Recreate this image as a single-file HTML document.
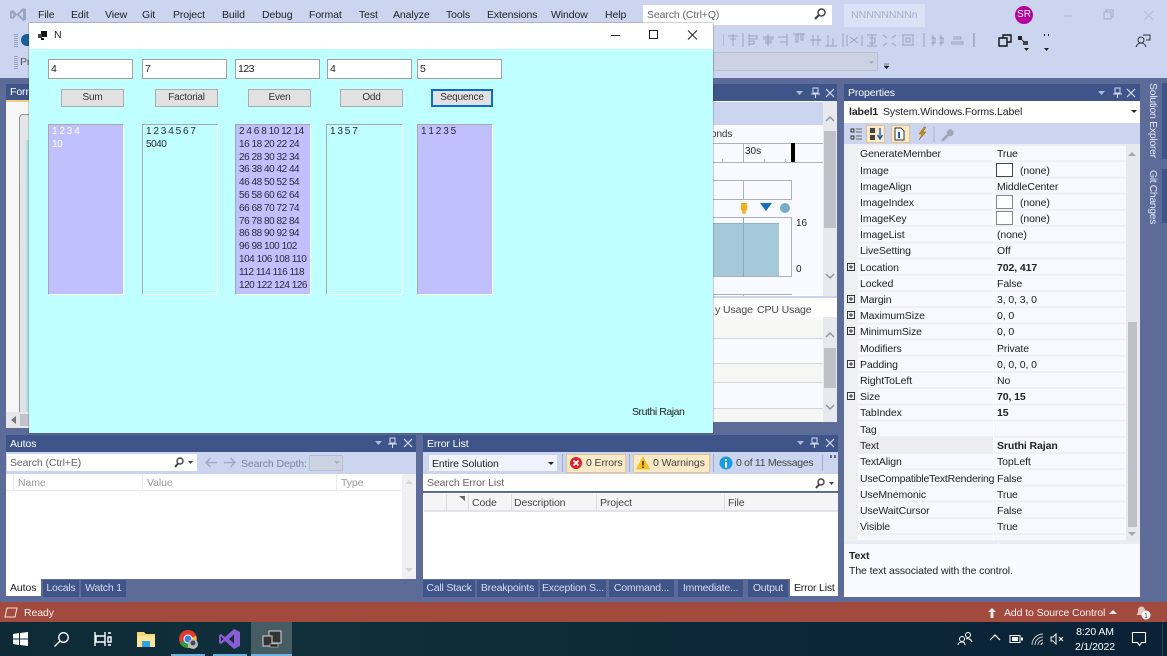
<!DOCTYPE html>
<html><head><meta charset="utf-8"><style>
html,body{margin:0;padding:0}
body{width:1167px;height:656px;overflow:hidden;position:relative;background:#5d6b99;font-family:"Liberation Sans",sans-serif;font-size:10.5px;color:#222}
div,span,svg{position:absolute;box-sizing:border-box}
.t{white-space:nowrap;line-height:14px;letter-spacing:-.1px;margin-top:1px}
.w{color:#fff}
.g{color:#9a9a9a}
.b{font-weight:bold}
.hd{background:#3f5489;height:17px}
.tb{background:#3f5489;color:#d5dcf2;height:17px;line-height:17px;text-align:center;white-space:nowrap;top:580px;letter-spacing:-.2px}
.in{background:#fff;border:1px solid #a0a0a0;height:20px;top:59px;width:85px;line-height:18px;padding-left:2px;font-size:10.5px;letter-spacing:-.5px}
.bt{background:#e1e1e1;border:1px solid #adadad;height:18px;top:89px;width:63px;text-align:center;line-height:16px;font-size:10px;letter-spacing:-.2px;color:#333}
.lb{top:124px;height:171px;width:76px;border:1px solid;border-color:#a8a8a8 #fff #fff #a8a8a8;padding:1px 0 0 3px;line-height:12.8px;font-size:10px;white-space:pre;letter-spacing:-.47px;color:#2a2a3a}
.ln{background:#e9ecf8}
</style></head><body>

<!-- top chrome -->
<div style="left:0;top:0;width:1167px;height:78px;background:#ccd5f0"></div>
<svg style="left:9px;top:6px" width="18" height="17" viewBox="0 0 18 17"><path d="M1 5l3-1 4 4 6-6 3 1v11l-3 1-6-6-4 4-3-1zM3 7v4l2-2zM14 5l-4 3.500 4 3.500z" fill="#9aa5c6" fill-rule="evenodd"/></svg>
<span class="t" style="left:38px;top:7px">File</span>
<span class="t" style="left:71px;top:7px">Edit</span>
<span class="t" style="left:105px;top:7px">View</span>
<span class="t" style="left:142px;top:7px">Git</span>
<span class="t" style="left:173px;top:7px">Project</span>
<span class="t" style="left:222px;top:7px">Build</span>
<span class="t" style="left:262px;top:7px">Debug</span>
<span class="t" style="left:309px;top:7px">Format</span>
<span class="t" style="left:359px;top:7px">Test</span>
<span class="t" style="left:393px;top:7px">Analyze</span>
<span class="t" style="left:446px;top:7px">Tools</span>
<span class="t" style="left:487px;top:7px">Extensions</span>
<span class="t" style="left:551px;top:7px">Window</span>
<span class="t" style="left:605px;top:7px">Help</span>
<div style="left:643px;top:5px;width:189px;height:20px;background:#fff"></div>
<span class="t" style="left:647px;top:7px;color:#666">Search (Ctrl+Q)</span>
<svg style="left:812px;top:7px" width="16" height="15" viewBox="0 0 16 15"><circle cx="9.500" cy="5.500" r="3.500" fill="none" stroke="#444" stroke-width="1.500"/><path d="M7 8l-4 4" stroke="#444" stroke-width="2.200"/></svg>
<div style="left:844px;top:4px;width:81px;height:23px;background:#dbe2f6"></div>
<span class="t" style="left:851px;top:7px;color:#a5aec9;letter-spacing:0">NNNNNNNNn</span>
<div style="left:1015px;top:6px;width:18px;height:18px;border-radius:50%;background:#b5009a;color:#fff;text-align:center;line-height:18px;font-size:10px">SR</div>
<svg style="left:1060px;top:6px" width="100" height="18" viewBox="0 0 100 18"><path d="M4 10h8" stroke="#b5bdd5"/><path d="M44 6h7v7h-7zM46 6V4h7v7h-2" fill="none" stroke="#a4adc8"/><path d="M84 5l9 9M93 5l-9 9" stroke="#b5bdd5"/></svg>

<!-- toolbar -->
<div style="left:14px;top:33px;width:4px;height:14px;background:repeating-linear-gradient(0deg,#9ba4c0 0 1px,#ccd5f0 1px 2px)"></div>
<div style="left:21px;top:34px;width:8px;height:12px;background:#1c5d9a;border-radius:6px 0 0 6px"></div>
<div style="left:14px;top:55px;width:4px;height:14px;background:repeating-linear-gradient(0deg,#9ba4c0 0 1px,#ccd5f0 1px 2px)"></div>
<span class="t" style="left:20px;top:54px;color:#555">Pr</span>
<svg style="left:713px;top:30px" width="370" height="20" viewBox="0 0 370 20" fill="none" stroke="#98a2be">
<path d="M10 5h1M10 7h1M10 9h1M10 11h1M10 13h1M10 15h1"/>
<path d="M15 6h10M20 4v12M17 9h6"/>
<path d="M30 3v14M36 4v12M36 6h8v3h-8M36 11h5v3h-5"/>
<path d="M55 4v12M50 7h10v2H50M52 11h6v2h-6"/>
<path d="M74 4v12M65 7h9M67 12h7"/>
<path d="M80 4h12M83 4v8h2V4M88 4v6h2V4"/>
<path d="M100 5v11M105 5v11M97 10h11"/>
<path d="M112 16h12M115 5v11M120 8v8"/>
<path d="M130 3v14M134 5v11M149 5v11M137 7l8 6M145 7l-8 6"/>
<path d="M154 5h10M154 16h10M159 5v11M156 8h6v5h-6"/>
<path d="M170 5l4 3M183 5l-4 3M170 16l4-3M183 16l-4-3"/>
<path d="M190 5h10v10h-10zM193 8h4v4h-4z"/>
<path d="M211 3v14M220 5v11M228 5v11M218 8h4v5h-4M226 8h4v5h-4"/>
<path d="M240 7h8v2h-8M238 12h12v2h-12"/>
<path d="M261 3v14" stroke="#7f88a6"/>
</svg>
<svg style="left:995px;top:33px" width="30" height="16" viewBox="0 0 30 16"><path d="M4 5h8v8H4zM8 5V2h8v7h-4" fill="none" stroke="#111" stroke-width="1.400"/></svg>
<svg style="left:1012px;top:33px" width="40" height="20" viewBox="0 0 40 20"><rect x="6" y="3" width="4" height="4" fill="#222"/><rect x="11" y="8" width="5" height="4" fill="#444"/><path d="M10 7l2 2" stroke="#222"/><path d="M12 15h5l-2.500 3zM32 15h5l-2.500 3" fill="#222"/><path d="M32 2h1M36 2h1" stroke="#222" stroke-width="2"/></svg>
<svg style="left:1133px;top:32px" width="20" height="18" viewBox="0 0 20 18"><circle cx="8" cy="8" r="3" fill="none" stroke="#333"/><path d="M3 15c1-3 3-4 5-4s4 1 5 4" fill="none" stroke="#333"/><path d="M10 3h7v5h-4" fill="none" stroke="#333"/></svg>
<div style="left:713px;top:52px;width:165px;height:19px;background:#ccd2e2;border:1px solid #b8bfd5"></div>
<svg style="left:868px;top:60px" width="8" height="6"><path d="M1 1h5L3.500 4z" fill="#aab"/></svg>
<svg style="left:883px;top:63px" width="8" height="8"><path d="M1 1h5M1 3h5L3.500 6z" fill="#222" stroke="#222" stroke-width=".5"/></svg>

<!-- designer panel (left) -->
<div class="hd" style="left:6px;top:84px;width:24px;height:16px"></div>
<span class="t w" style="left:10px;top:84px">Forr</span>
<div style="left:6px;top:100px;width:24px;height:2px;background:#f5cc84"></div>
<div style="left:6px;top:102px;width:24px;height:326px;background:#f6f6f7"></div>
<div style="left:19px;top:114px;width:11px;height:300px;border:1px solid #8c9097;border-width:1px 0 0 1px;border-radius:4px 0 0 0;background:linear-gradient(#e2e6ea,#dfe3e8)"></div>
<div style="left:26px;top:140px;width:4px;height:274px;background:#b2e0e0"></div>
<div style="left:6px;top:412px;width:24px;height:16px;background:#e6e7ec"></div>
<svg style="left:11px;top:416px" width="6" height="9"><path d="M5 0v8L0 4z" fill="#777"/></svg>
<div style="left:20px;top:414px;width:10px;height:12px;background:#c2c3c9"></div>

<!-- diagnostics panel -->
<div class="hd" style="left:713px;top:84px;width:124px"></div>
<svg style="left:795px;top:87px" width="40" height="12" viewBox="0 0 40 12"><path d="M1 4h7L4.500 8z" fill="#aebada"/><path d="M18 1h5v5h-5zM20.500 6v5M16 7h9" fill="none" stroke="#d5dcf2"/><path d="M31 2l8 8M39 2l-8 8" stroke="#d5dcf2" stroke-width="1.200"/></svg>
<div style="left:713px;top:101px;width:124px;height:321px;background:#fff"></div>
<div style="left:713px;top:102px;width:110px;height:23px;background:#ccd5f0"></div>
<div style="left:713px;top:125px;width:110px;height:170px;background:#f9faff"></div>
<span class="t" style="left:711px;top:127px;color:#333;font-size:10px">onds</span>
<div style="left:713px;top:143px;width:110px;height:1px;background:#a9b2bd"></div>
<div style="left:713px;top:162px;width:110px;height:1px;background:#a9b2bd"></div>
<div style="left:743px;top:143px;width:1px;height:19px;background:#a9b2bd"></div>
<div style="left:722px;top:159px;width:1px;height:3px;background:#a9b2bd"></div>
<div style="left:764px;top:159px;width:1px;height:3px;background:#a9b2bd"></div>
<div style="left:785px;top:159px;width:1px;height:3px;background:#a9b2bd"></div>
<span class="t" style="left:745px;top:144px;font-size:10px;letter-spacing:0">30s</span>
<div style="left:791px;top:143px;width:4px;height:19px;background:#000"></div>
<div style="left:713px;top:180px;width:79px;height:20px;border:1px solid #a9b2bd;border-left:0"></div>
<div style="left:743px;top:180px;width:1px;height:20px;background:#a9b2bd"></div>
<svg style="left:738px;top:202px" width="60" height="14"><path d="M3 1h6v6l-2 5H5L3 7z" fill="#f6b01a"/><path d="M22 1h12l-6 8z" fill="#0b72c4"/><circle cx="47" cy="6" r="5" fill="#75aecb"/></svg>
<div style="left:713px;top:217px;width:79px;height:60px;border:1px solid #a9b2bd;border-left:0"></div>
<div style="left:713px;top:223px;width:66px;height:53px;background:#a6c9da;border-top:1px solid #8db5c9"></div>
<div style="left:743px;top:217px;width:1px;height:60px;background:#8fa8b7"></div>
<span class="t" style="left:796px;top:216px;font-size:10px;letter-spacing:0">16</span>
<span class="t" style="left:796px;top:262px;font-size:10px;letter-spacing:0">0</span>
<div style="left:713px;top:294px;width:79px;height:1px;background:#a9b2bd"></div>
<div style="left:743px;top:294px;width:1px;height:3px;background:#a9b2bd"></div>
<div style="left:823px;top:101px;width:14px;height:195px;background:#e8e9ee"></div>
<div style="left:824px;top:131px;width:12px;height:97px;background:#bfc0c7"></div>
<svg style="left:824px;top:114px" width="12" height="170" viewBox="0 0 12 170" fill="none" stroke="#8f94a3" stroke-width="1.500"><path d="M2 7l4-4 4 4M2 160l4 4 4-4"/></svg>
<div style="left:713px;top:296px;width:124px;height:2px;background:#ccd5f0"></div>
<span class="t" style="left:715px;top:302px;color:#444">y Usage</span>
<span class="t" style="left:757px;top:302px;color:#444">CPU Usage</span>
<div style="left:713px;top:317px;width:110px;height:105px;background:#f9faff"></div>
<div style="left:713px;top:320px;width:110px;height:18px;background:#f6f6f4"></div>
<div style="left:713px;top:338px;width:110px;height:1px;background:#d5d5dc"></div>
<div style="left:713px;top:363px;width:110px;height:20px;background:#f6f6f4;border-top:1px solid #d5d5dc;border-bottom:1px solid #d5d5dc"></div>
<div style="left:713px;top:408px;width:110px;height:14px;background:#f6f6f4;border-top:1px solid #d5d5dc"></div>
<div style="left:823px;top:317px;width:14px;height:105px;background:#e8e9ee"></div>
<div style="left:824px;top:348px;width:12px;height:40px;background:#bfc0c7"></div>
<svg style="left:824px;top:330px" width="12" height="85" viewBox="0 0 12 85" fill="none" stroke="#8f94a3" stroke-width="1.500"><path d="M2 7l4-4 4 4M2 75l4 4 4-4"/></svg>

<!-- Properties -->
<div class="hd" style="left:844px;top:84px;width:296px"></div>
<span class="t w" style="left:848px;top:85px">Properties</span>
<svg style="left:1097px;top:87px" width="40" height="12" viewBox="0 0 40 12"><path d="M1 4h7L4.500 8z" fill="#aebada"/><path d="M18 1h5v5h-5zM20.500 6v5M16 7h9" fill="none" stroke="#d5dcf2"/><path d="M30 2l8 8M38 2l-8 8" stroke="#d5dcf2" stroke-width="1.200"/></svg>
<div style="left:844px;top:101px;width:296px;height:496px;background:#f9faff"></div>
<div style="left:844px;top:101px;width:296px;height:22px;background:#fff"></div>
<span class="t b" style="left:849px;top:104px">label1</span>
<span class="t" style="left:883px;top:104px">System.Windows.Forms.Label</span>
<svg style="left:1131px;top:110px" width="6" height="4"><path d="M0 0h6L3 3z" fill="#222"/></svg>
<div style="left:844px;top:123px;width:296px;height:21px;background:#ccd5f0"></div>
<div style="left:866px;top:125px;width:19px;height:18px;background:#fbe9c8;border:1px solid #e5c28c"></div>
<div style="left:891px;top:125px;width:19px;height:18px;background:#fbe9c8;border:1px solid #e5c28c"></div>
<svg style="left:849px;top:125px" width="110" height="18" viewBox="0 0 110 18"><path d="M2 4h3v3H2zM2 11h3v3H2z" fill="none" stroke="#333"/><path d="M7 4h6M7 7h6M7 11h6M7 14h6" stroke="#666"/><path d="M21 3h5v5h-5zM21 10h5v5h-5z" fill="#444"/><path d="M31 3v11M28.500 10l2.500 4 2.500-4" stroke="#1c5fb8" stroke-width="1.400" fill="none"/><path d="M46 3h6l3 3v9H46z" fill="#fff" stroke="#333"/><path d="M50 7v6" stroke="#1c5fb8" stroke-width="2"/><path d="M75 2l-5 7h3l-3 6 7-8h-3l3-5z" fill="#c98a1b" stroke="#7a5a1a" stroke-width=".4"/><path d="M85 2v15" stroke="#a9b2cf"/><path d="M92 15l6-6a3.500 3.500 0 1 1 2 2l-6 6z" fill="#a3a7b3"/></svg>
<div style="left:844px;top:144px;width:14px;height:397px;background:#f0f0f2"></div>
<div style="left:858px;top:144px;width:275px;height:397px;background:#eceef7"></div>
<div style="left:993px;top:144px;width:1px;height:397px;background:#fff"></div>
<div style="left:858px;top:146px;width:135px;height:394px;background:repeating-linear-gradient(180deg,#f8f9fe 0 14.300px,#eef0f8 14.300px 16.210px)"></div>
<div style="left:994px;top:146px;width:139px;height:394px;background:repeating-linear-gradient(180deg,#f8f9fe 0 14.300px,#eef0f8 14.300px 16.210px)"></div>
<div style="left:858px;top:438px;width:135px;height:16px;background:#ededf0"></div>
<span class="t" style="left:860px;top:146px">GenerateMember</span><span class="t" style="left:997px;top:146px">True</span>
<span class="t" style="left:860px;top:163px">Image</span><span class="t" style="left:1020px;top:163px">(none)</span>
<span class="t" style="left:860px;top:179px">ImageAlign</span><span class="t" style="left:997px;top:179px">MiddleCenter</span>
<span class="t" style="left:860px;top:195px">ImageIndex</span><span class="t" style="left:1020px;top:195px">(none)</span>
<span class="t" style="left:860px;top:211px">ImageKey</span><span class="t" style="left:1020px;top:211px">(none)</span>
<span class="t" style="left:860px;top:227px">ImageList</span><span class="t" style="left:997px;top:227px">(none)</span>
<span class="t" style="left:860px;top:243px">LiveSetting</span><span class="t" style="left:997px;top:243px">Off</span>
<span class="t" style="left:860px;top:260px">Location</span><span class="t b" style="left:997px;top:260px">702, 417</span>
<span class="t" style="left:860px;top:276px">Locked</span><span class="t" style="left:997px;top:276px">False</span>
<span class="t" style="left:860px;top:292px">Margin</span><span class="t" style="left:997px;top:292px">3, 0, 3, 0</span>
<span class="t" style="left:860px;top:308px">MaximumSize</span><span class="t" style="left:997px;top:308px">0, 0</span>
<span class="t" style="left:860px;top:324px">MinimumSize</span><span class="t" style="left:997px;top:324px">0, 0</span>
<span class="t" style="left:860px;top:341px">Modifiers</span><span class="t" style="left:997px;top:341px">Private</span>
<span class="t" style="left:860px;top:357px">Padding</span><span class="t" style="left:997px;top:357px">0, 0, 0, 0</span>
<span class="t" style="left:860px;top:373px">RightToLeft</span><span class="t" style="left:997px;top:373px">No</span>
<span class="t" style="left:860px;top:389px">Size</span><span class="t b" style="left:997px;top:389px">70, 15</span>
<span class="t" style="left:860px;top:405px">TabIndex</span><span class="t b" style="left:997px;top:405px">15</span>
<span class="t" style="left:860px;top:422px">Tag</span>
<span class="t" style="left:860px;top:438px">Text</span><span class="t b" style="left:997px;top:438px">Sruthi Rajan</span>
<span class="t" style="left:860px;top:454px">TextAlign</span><span class="t" style="left:997px;top:454px">TopLeft</span>
<span class="t" style="left:860px;top:471px;letter-spacing:-.2px">UseCompatibleTextRendering</span><span class="t" style="left:997px;top:471px">False</span>
<span class="t" style="left:860px;top:487px">UseMnemonic</span><span class="t" style="left:997px;top:487px">True</span>
<span class="t" style="left:860px;top:503px">UseWaitCursor</span><span class="t" style="left:997px;top:503px">False</span>
<span class="t" style="left:860px;top:519px">Visible</span><span class="t" style="left:997px;top:519px">True</span>
<div style="left:996px;top:163px;width:17px;height:14px;background:#fff;border:1px solid #444"></div>
<div style="left:996px;top:195px;width:17px;height:14px;background:#fff;border:1px solid #888"></div>
<div style="left:996px;top:211px;width:17px;height:14px;background:#fff;border:1px solid #888"></div>
<svg style="left:846px;top:262px" width="10" height="145" viewBox="0 0 10 145" fill="none" stroke="#333"><path d="M1.500 1.500h7v7h-7zM3 5h4M5 3v4M1.500 33.500h7v7h-7zM3 37h4M5 35v4M1.500 49.500h7v7h-7zM3 53h4M5 51v4M1.500 65.500h7v7h-7zM3 69h4M5 67v4M1.500 98.500h7v7h-7zM3 102h4M5 100v4M1.500 130.500h7v7h-7zM3 134h4M5 132v4"/></svg>
<div style="left:1126px;top:144px;width:14px;height:397px;background:#e8e9ee"></div>
<div style="left:1128px;top:322px;width:9px;height:205px;background:#bfc0c7"></div>
<svg style="left:1127px;top:150px" width="10" height="390"><path d="M1 6h8L5 2zM1 382h8l-4 4z" fill="#a5a8b3"/></svg>
<div style="left:844px;top:541px;width:296px;height:3px;background:#e9ebf5"></div>
<span class="t b" style="left:849px;top:548px">Text</span>
<span class="t" style="left:849px;top:563px">The text associated with the control.</span>

<!-- side tabs -->
<div class="t" style="left:1146px;top:83px;margin-top:0;color:#e3e8f8;writing-mode:vertical-rl;letter-spacing:-.3px">Solution Explorer</div>
<div class="t" style="left:1146px;top:170px;margin-top:0;color:#e3e8f8;writing-mode:vertical-rl;letter-spacing:-.4px">Git Changes</div>
<div style="left:1162px;top:83px;width:5px;height:76px;background:#3f5489"></div>
<div style="left:1162px;top:169px;width:5px;height:54px;background:#3f5489"></div>

<!-- Autos -->
<div class="hd" style="left:6px;top:435px;width:410px"></div>
<span class="t w" style="left:10px;top:436px">Autos</span>
<svg style="left:374px;top:437px" width="40" height="12" viewBox="0 0 40 12"><path d="M1 4h7L4.500 8z" fill="#aebada"/><path d="M16 1h5v5h-5zM18.500 6v5M14 7h9" fill="none" stroke="#d5dcf2"/><path d="M30 2l8 8M38 2l-8 8" stroke="#d5dcf2" stroke-width="1.200"/></svg>
<div style="left:6px;top:452px;width:410px;height:22px;background:#ccd5f0"></div>
<div style="left:7px;top:454px;width:190px;height:17px;background:#fff"></div>
<span class="t" style="left:10px;top:455px;color:#666">Search (Ctrl+E)</span>
<svg style="left:174px;top:456px" width="20" height="13" viewBox="0 0 20 13"><circle cx="6" cy="5" r="3" fill="none" stroke="#444" stroke-width="1.400"/><path d="M4 7.500L1 11" stroke="#444" stroke-width="2"/><path d="M14 5h5l-2.500 3z" fill="#444"/></svg>
<svg style="left:204px;top:456px" width="34" height="13" viewBox="0 0 34 13" fill="none" stroke="#a0a9c5" stroke-width="1.500"><path d="M13 6.500H2M6.500 2L2 6.500 6.500 11M20 6.500h11M26.500 2L31 6.500 26.500 11"/></svg>
<span class="t" style="left:241px;top:456px;color:#7c8396">Search Depth:</span>
<div style="left:309px;top:455px;width:34px;height:16px;background:#ccd2e2;border:1px solid #b8bfd5"></div>
<svg style="left:334px;top:461px" width="7" height="5"><path d="M0 0h6L3 3z" fill="#a5adc5"/></svg>
<div style="left:6px;top:474px;width:410px;height:105px;background:#fff"></div>
<div style="left:6px;top:490px;width:396px;height:1px;background:#e9ecf8"></div>
<div style="left:13px;top:474px;width:1px;height:16px;background:#e9ecf8"></div>
<div style="left:142px;top:474px;width:1px;height:16px;background:#e9ecf8"></div>
<div style="left:336px;top:474px;width:1px;height:16px;background:#e9ecf8"></div>
<span class="t g" style="left:18px;top:475px">Name</span>
<span class="t g" style="left:147px;top:475px">Value</span>
<span class="t g" style="left:341px;top:475px">Type</span>
<div style="left:402px;top:474px;width:14px;height:105px;background:#f0f0f3"></div>
<svg style="left:404px;top:478px" width="10" height="98"><path d="M1 6h8L5 2zM1 90h8l-4 4z" fill="#d3d5db"/></svg>
<div style="left:6px;top:579px;width:35px;height:17px;background:#fff"></div>
<span class="t" style="left:10px;top:580px">Autos</span>
<div class="tb" style="left:43px;width:36px">Locals</div>
<div class="tb" style="left:81px;width:45px">Watch 1</div>

<!-- Error list -->
<div class="hd" style="left:423px;top:435px;width:415px"></div>
<span class="t w" style="left:427px;top:436px">Error List</span>
<svg style="left:796px;top:437px" width="40" height="12" viewBox="0 0 40 12"><path d="M1 4h7L4.500 8z" fill="#aebada"/><path d="M16 1h5v5h-5zM18.500 6v5M14 7h9" fill="none" stroke="#d5dcf2"/><path d="M30 2l8 8M38 2l-8 8" stroke="#d5dcf2" stroke-width="1.200"/></svg>
<div style="left:423px;top:452px;width:415px;height:22px;background:#ccd5f0"></div>
<div style="left:429px;top:455px;width:128px;height:16px;background:#f0f3fc"></div>
<span class="t" style="left:432px;top:456px">Entire Solution</span>
<svg style="left:548px;top:462px" width="7" height="5"><path d="M0 0h6L3 3z" fill="#222"/></svg>
<div style="left:562px;top:454px;width:1px;height:18px;background:#a3adc9"></div>
<div style="left:566px;top:454px;width:60px;height:19px;background:#fbe9c8;border:1px solid #e5c28c"></div>
<svg style="left:569px;top:456px" width="14" height="14" viewBox="0 0 14 14"><circle cx="7" cy="7" r="6" fill="#e3202c"/><path d="M4.500 4.500l5 5M9.500 4.500l-5 5" stroke="#fff" stroke-width="1.800"/></svg>
<span class="t" style="left:586px;top:455px;color:#444">0 Errors</span>
<div style="left:629px;top:454px;width:1px;height:18px;background:#a3adc9"></div>
<div style="left:633px;top:454px;width:77px;height:19px;background:#fbe9c8;border:1px solid #e5c28c"></div>
<svg style="left:636px;top:456px" width="14" height="14" viewBox="0 0 14 14"><path d="M7 1l6.500 12H.5z" fill="#fdc414" stroke="#d9a400" stroke-width=".5"/><path d="M7 5v4.500M7 10.500v1.500" stroke="#222" stroke-width="1.400"/></svg>
<span class="t" style="left:653px;top:455px;color:#444">0 Warnings</span>
<div style="left:713px;top:454px;width:1px;height:18px;background:#a3adc9"></div>
<svg style="left:719px;top:456px" width="14" height="14" viewBox="0 0 14 14"><circle cx="7" cy="7" r="6.500" fill="#1c9ce0"/><path d="M7 3v1.800M7 6v5.500" stroke="#fff" stroke-width="2"/></svg>
<span class="t" style="left:736px;top:455px;color:#444;letter-spacing:-.3px">0 of 11 Messages</span>
<div style="left:822px;top:455px;width:1px;height:16px;background:#a3adc9"></div>
<svg style="left:830px;top:455px" width="7" height="4"><path d="M1 0v3M5 0v3" stroke="#444" stroke-width="1.500"/></svg>
<div style="left:423px;top:474px;width:415px;height:17px;background:#fff"></div>
<span class="t" style="left:427px;top:475px;color:#666">Search Error List</span>
<svg style="left:813px;top:477px" width="22" height="13" viewBox="0 0 22 13"><circle cx="8" cy="5" r="3" fill="none" stroke="#444" stroke-width="1.400"/><path d="M6 7.500L3 11" stroke="#444" stroke-width="2"/><path d="M16 5h5l-2.500 3z" fill="#444"/></svg>
<div style="left:423px;top:493px;width:415px;height:86px;background:#fff"></div>
<div style="left:424px;top:494px;width:414px;height:18px;background:#f5f5f5;border-bottom:2px solid #e3e4ea"></div>
<div style="left:446px;top:494px;width:1px;height:17px;background:#dcdde3"></div>
<div style="left:468px;top:494px;width:1px;height:17px;background:#dcdde3"></div>
<div style="left:511px;top:494px;width:1px;height:17px;background:#dcdde3"></div>
<div style="left:596px;top:494px;width:1px;height:17px;background:#dcdde3"></div>
<div style="left:724px;top:494px;width:1px;height:17px;background:#dcdde3"></div>
<svg style="left:459px;top:496px" width="7" height="6"><path d="M0 0h6v5z" fill="#666"/></svg>
<span class="t" style="left:472px;top:495px;color:#444">Code</span>
<span class="t" style="left:514px;top:495px;color:#444">Description</span>
<span class="t" style="left:600px;top:495px;color:#444">Project</span>
<span class="t" style="left:728px;top:495px;color:#444">File</span>
<div class="tb" style="left:423px;width:52px">Call Stack</div>
<div class="tb" style="left:477px;width:61px">Breakpoints</div>
<div class="tb" style="left:540px;width:66px">Exception S...</div>
<div class="tb" style="left:609px;width:65px">Command...</div>
<div class="tb" style="left:678px;width:65px">Immediate...</div>
<div class="tb" style="left:748px;width:40px">Output</div>
<div style="left:790px;top:579px;width:48px;height:17px;background:#fff"></div>
<span class="t" style="left:794px;top:580px;letter-spacing:-.2px">Error List</span>

<!-- Form window -->
<div style="left:29px;top:23px;width:684px;height:410px;background:#bfffff;box-shadow:0 0 1px #222"></div>
<div style="left:29px;top:23px;width:684px;height:26px;background:#fff"></div>
<svg style="left:37px;top:30px" width="12" height="11" viewBox="0 0 12 11"><rect x="4" y="1" width="6" height="6" fill="#111"/><rect x="1" y="4" width="4" height="4" fill="#444"/><rect x="4" y="8" width="3" height="2" fill="#111"/></svg>
<span class="t" style="left:54px;top:27px;font-size:10.500px">N</span>
<svg style="left:605px;top:28px" width="100" height="14" viewBox="0 0 100 14" fill="none" stroke="#222"><path d="M6 7.500h9"/><path d="M44.500 2.500h8v8h-8z"/><path d="M83 2.500l9 9M92 2.500l-9 9"/></svg>

<div class="in" style="left:48px">4</div>
<div class="in" style="left:142px">7</div>
<div class="in" style="left:235px">123</div>
<div class="in" style="left:327px">4</div>
<div class="in" style="left:417px">5</div>

<div class="bt" style="left:61px">Sum</div>
<div class="bt" style="left:155px">Factorial</div>
<div class="bt" style="left:248px">Even</div>
<div class="bt" style="left:340px">Odd</div>
<div class="bt" style="left:431px;border:2px solid #0e6cc4;line-height:14px;width:62px">Sequence</div>

<div class="lb" style="left:48px;background:#c0c0ff;color:#fff">1 2 3 4
10</div>
<div class="lb" style="left:142px">1 2 3 4 5 6 7
5040</div>
<div class="lb" style="left:235px;background:#c0c0ff">2 4 6 8 10 12 14
16 18 20 22 24
26 28 30 32 34
36 38 40 42 44
46 48 50 52 54
56 58 60 62 64
66 68 70 72 74
76 78 80 82 84
86 88 90 92 94
96 98 100 102
104 106 108 110
112 114 116 118
120 122 124 126</div>
<div class="lb" style="left:326px;width:77px">1 3 5 7</div>
<div class="lb" style="left:417px;background:#c0c0ff">1 1 2 3 5</div>
<span class="t" style="left:632px;top:404px;letter-spacing:-.45px">Sruthi Rajan</span>

<!-- status bar -->
<div style="left:0;top:602px;width:1167px;height:20px;background:#a34a3f"></div>
<svg style="left:3px;top:606px" width="16" height="13" viewBox="0 0 16 13"><path d="M4 2h10l-2 9H2z" fill="none" stroke="#f2dcd8" stroke-width="1.100"/></svg>
<span class="t" style="left:24px;top:605px;color:#fbeeee">Ready</span>
<svg style="left:987px;top:607px" width="10" height="12" viewBox="0 0 10 12"><path d="M5 1l4 4H6.500v6h-3V5H1z" fill="#f6e8e6"/></svg>
<span class="t" style="left:1004px;top:605px;color:#fbeeee">Add to Source Control</span>
<svg style="left:1109px;top:610px" width="9" height="5"><path d="M0 4h8L4 0z" fill="#fbeeee"/></svg>
<svg style="left:1133px;top:604px" width="20" height="17" viewBox="0 0 20 17"><path d="M3 11c2-1 2-3 2-5a3.500 3.500 0 0 1 7 0c0 2 0 4 2 5z" fill="#e5c6c1"/><circle cx="13" cy="11" r="4.500" fill="#fff"/><text x="13" y="14" font-size="7" text-anchor="middle" fill="#333" font-family="Liberation Sans">1</text></svg>

<!-- taskbar -->
<div style="left:0;top:622px;width:1167px;height:34px;background:linear-gradient(90deg,#0d2a36,#10303c 25%,#0c2838 60%,#0b2236)"></div>
<svg style="left:12px;top:631px" width="17" height="16" viewBox="0 0 17 16"><path d="M1 3l6-1v5.500H1zM8 2l8-1v6.500H8zM1 8.500h6V14l-6-1zM8 8.500h8V15l-8-1z" fill="#fff"/></svg>
<svg style="left:53px;top:631px" width="18" height="17" viewBox="0 0 18 17" fill="none" stroke="#fff" stroke-width="1.300"><circle cx="10.500" cy="6.500" r="4.800"/><path d="M7 10l-5.500 5.500"/></svg>
<svg style="left:94px;top:631px" width="18" height="16" viewBox="0 0 18 16" fill="none" stroke="#fff" stroke-width="1.400"><path d="M1 1v14M2 5h9v6H2zM11 1v14M14 2h3M14 6h3v5h-3zM14 14h3"/></svg>
<svg style="left:136px;top:630px" width="20" height="18" viewBox="0 0 20 18"><path d="M1 2h7l2 2h9v13H1z" fill="#f7d774"/><path d="M1 6h18v11H1z" fill="#fce598"/><path d="M6 11h8v6H6z" fill="#2da3e0"/></svg>
<svg style="left:178px;top:629px" width="22" height="22" viewBox="0 0 22 22"><circle cx="10" cy="10" r="9" fill="#e0392d"/><path d="M10 10L2 14a9 9 0 0 0 8 5z" fill="#2e9b47"/><path d="M10 10l8-3a9 9 0 0 1-8 12z" fill="#f5c324"/><circle cx="10" cy="10" r="4" fill="#3a7ee0" stroke="#fff"/><circle cx="15" cy="15" r="5" fill="#b9bcc3"/><circle cx="15" cy="14" r="2.500" fill="#46464c"/></svg>
<svg style="left:219px;top:628px" width="22" height="22" viewBox="0 0 22 22"><path d="M15 1l6 3v14l-6 3L6 13l-4 3-2-1V7l2-1 4 3zM15 6.500L10 11l5 4.500zM2 8.500v5L4.500 11z" fill="#8a5bd6" fill-rule="evenodd"/></svg>
<div style="left:251px;top:622px;width:41px;height:34px;background:#465e63"></div>
<svg style="left:262px;top:630px" width="20" height="20" viewBox="0 0 20 20"><path d="M7 1h12v12H7z" fill="#333" stroke="#d5d8d8"/><path d="M1 6h9v10H1z" fill="#333" stroke="#d5d8d8"/><path d="M8 14h8v3H8z" fill="#222" stroke="#d5d8d8" stroke-width=".6"/></svg>
<div style="left:171px;top:654px;width:34px;height:2px;background:#6eb3e0"></div>
<div style="left:213px;top:654px;width:34px;height:2px;background:#6eb3e0"></div>
<div style="left:251px;top:654px;width:41px;height:2px;background:#6eb3e0"></div>
<svg style="left:957px;top:631px" width="16" height="15" viewBox="0 0 16 15" fill="none" stroke="#fff"><circle cx="5" cy="8" r="2.500"/><circle cx="11" cy="4" r="2.500"/><path d="M1 14c0-2 2-3 4-3s3 1 3 3M9 8c2-1 5 0 6 3"/></svg>
<svg style="left:989px;top:633px" width="13" height="9"><path d="M1 7l5-5 5 5" fill="none" stroke="#fff" stroke-width="1.200"/></svg>
<svg style="left:1009px;top:634px" width="15" height="10"><path d="M1 1.500h10v7H1z" fill="none" stroke="#fff"/><path d="M3 3h6v4H3z" fill="#fff"/><path d="M12 3.500h2v3h-2z" fill="#fff"/></svg>
<svg style="left:1031px;top:633px" width="14" height="13" viewBox="0 0 14 13" fill="none" stroke="#bfc6cc"><path d="M1 12A11 11 0 0 1 12 1M4 12a8 8 0 0 1 8-8M7 12a5 5 0 0 1 5-5"/><path d="M10 12a2 2 0 0 1 2-2" stroke="#fff"/></svg>
<svg style="left:1050px;top:633px" width="14" height="12" viewBox="0 0 14 12" fill="none" stroke="#fff"><path d="M1 4h2l3-3v10L3 8H1zM9 4l4 4M13 4l-4 4"/></svg>
<span class="t" style="left:1073px;top:624px;color:#fff;font-size:10.500px;width:44px;text-align:center">8:20 AM</span>
<span class="t" style="left:1073px;top:639px;color:#fff;font-size:10.500px;width:44px;text-align:center">2/1/2022</span>
<svg style="left:1131px;top:631px" width="16" height="16" viewBox="0 0 16 16"><path d="M1.500 1.500h13v10h-4l-2 3-2-3h-5z" fill="none" stroke="#fff" stroke-width="1.100"/></svg>
<div style="left:1162px;top:622px;width:1px;height:34px;background:#2a4452"></div>

</body></html>
